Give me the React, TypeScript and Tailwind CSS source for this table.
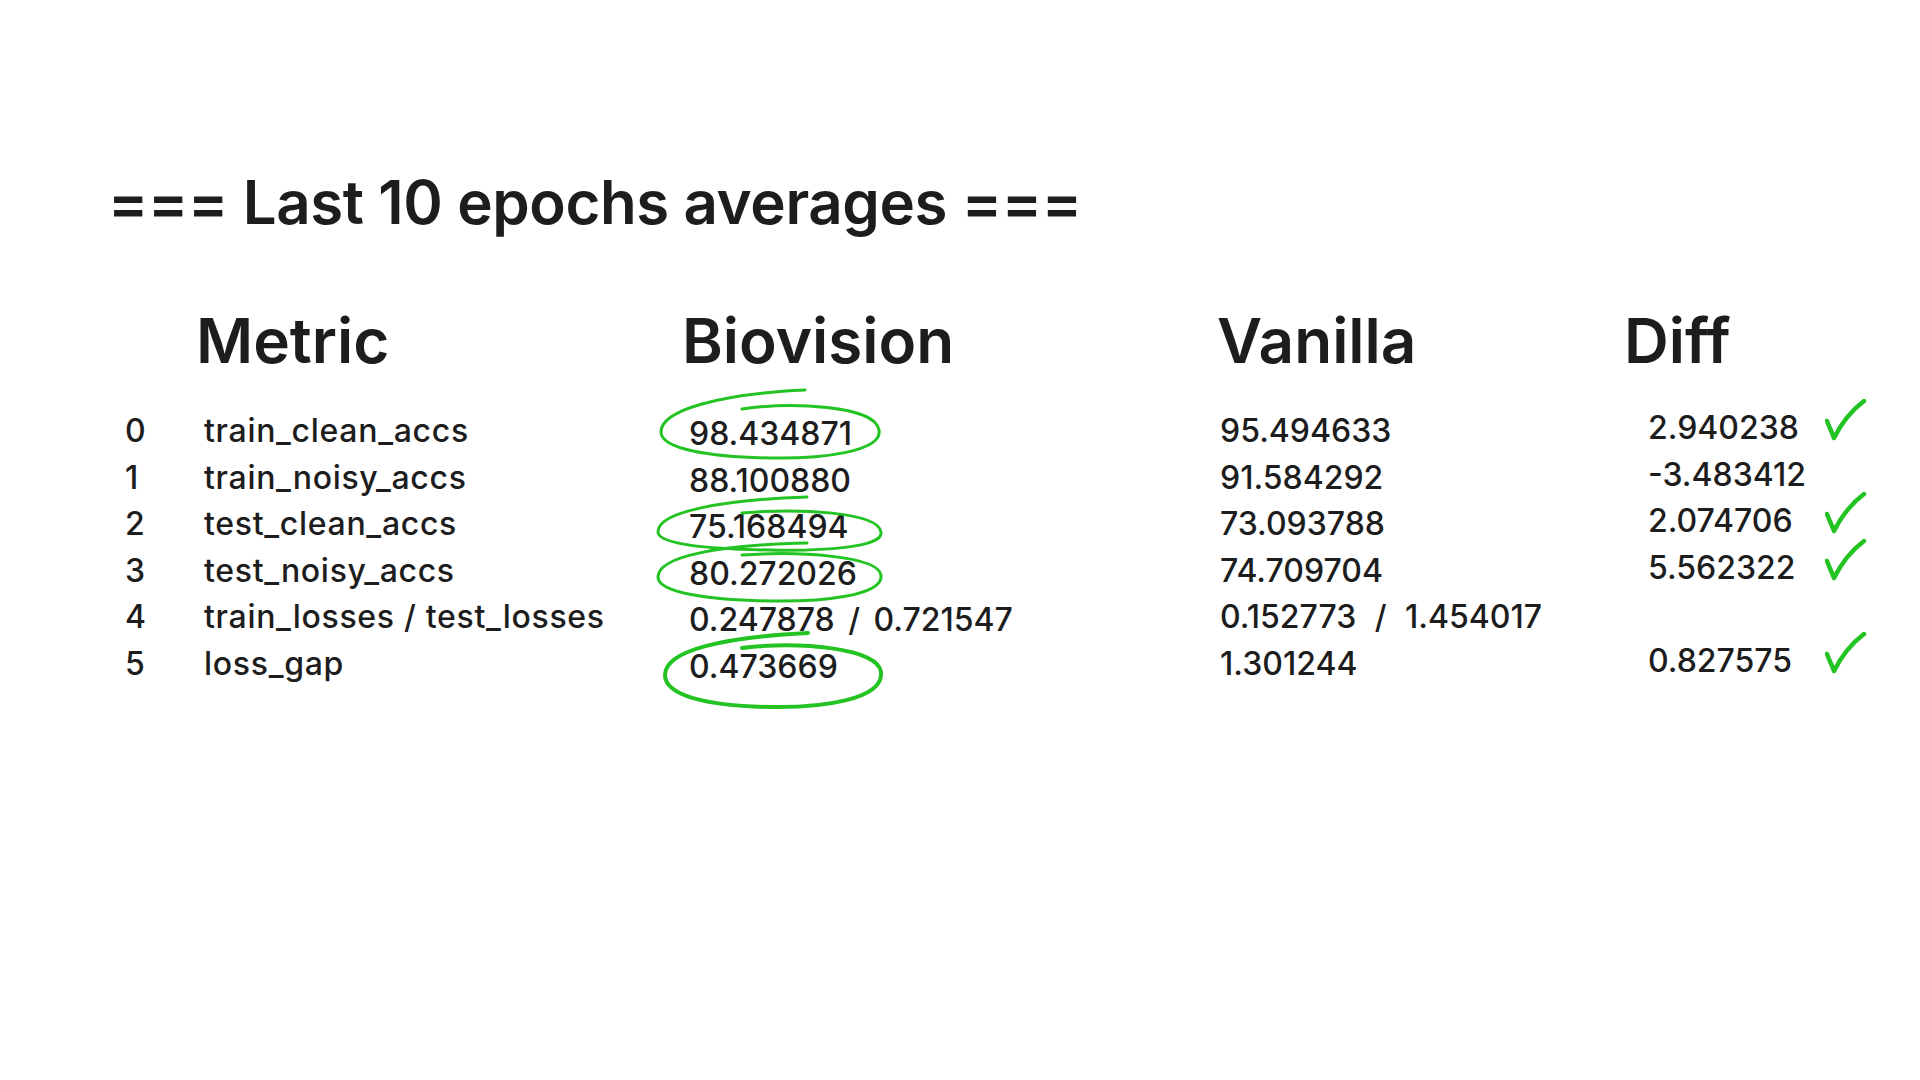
import React from 'react';

interface Row {
  idx: number;
  metric: string;
  bio: string;
  vanilla: string;
  diff: string;
  ok: boolean;
}

const rows: Row[] = [
  { idx: 0, metric: 'train_clean_accs', bio: '98.434871', vanilla: '95.494633', diff: '2.940238', ok: true },
  { idx: 1, metric: 'train_noisy_accs', bio: '88.100880', vanilla: '91.584292', diff: '-3.483412', ok: false },
  { idx: 2, metric: 'test_clean_accs', bio: '75.168494', vanilla: '73.093788', diff: '2.074706', ok: true },
  { idx: 3, metric: 'test_noisy_accs', bio: '80.272026', vanilla: '74.709704', diff: '5.562322', ok: true },
  { idx: 4, metric: 'train_losses / test_losses', bio: '0.247878 / 0.721547', vanilla: '0.152773 / 1.454017', diff: '', ok: false },
  { idx: 5, metric: 'loss_gap', bio: '0.473669', vanilla: '1.301244', diff: '0.827575', ok: true },
];

// hand-drawn loops around the Biovision values, in page coordinates
const loops = [
  { d: 'M742 409 C790 402, 875 405, 879 430 C883 452, 820 459, 770 458 C710 457, 661 449, 661 432 C661 410, 720 394, 805 390', w: 3 },
  { d: 'M742 513 C800 508, 878 512, 881 532 C884 548, 820 551, 770 550 C705 549, 658 544, 658 532 C658 512, 720 500, 807 497', w: 3 },
  { d: 'M742 555 C800 551, 878 556, 881 575 C884 596, 820 602, 770 601 C705 600, 658 592, 658 577 C658 556, 720 545, 807 543', w: 3 },
  { d: 'M742 648 C800 641, 878 648, 881 672 C884 700, 820 708, 770 707 C705 706, 665 695, 665 675 C665 650, 725 637, 808 633', w: 4 },
];

const Check = () => (
  <svg width="42" height="42" viewBox="0 0 42 42" className="-mt-[6px]">
    <path d="M2 22 C4 28, 7 33, 9 39 C16 25, 27 11, 39 2" fill="none" stroke="#22c322" strokeWidth="4.5" strokeLinecap="round" strokeLinejoin="round" />
  </svg>
);

const cols = 'grid grid-cols-[79px_485px_531px_428px_177px_60px]';

export default function App() {
  return (
    <div className="relative w-[1920px] h-[1080px] bg-white text-[#1d1d1d] font-['Inter','Noto_Sans',sans-serif] overflow-hidden">
      <h1 className="pl-[108px] pt-[171px] text-[60px] leading-[62px] font-semibold tracking-[-0.4px]">
        === Last 10 epochs averages ===
      </h1>

      <div className="pl-[125px] mt-[77px]">
        <div className={`${cols} text-[62px] leading-[62px] font-semibold`}>
          <div />
          <div className="-ml-[8px]">Metric</div>
          <div className="-ml-[7px]">Biovision</div>
          <div className="-ml-[3px]">Vanilla</div>
          <div className="-ml-[24px]">Diff</div>
          <div />
        </div>

        <div className="mt-[33px] flex flex-col text-[32px] leading-[46.6px] font-medium">
          {rows.map((r) => (
            <div key={r.idx} className={`${cols} h-[46.6px]`}>
              <div className="pt-[3px]">{r.idx}</div>
              <div className="pt-[3px] tracking-[0.7px]">{r.metric}</div>
              <div className="pt-[6px] [word-spacing:5px]">{r.bio}</div>
              <div className="pt-[3px] [word-spacing:10px]">{r.vanilla}</div>
              <div>{r.diff}</div>
              <div>{r.ok && <Check />}</div>
            </div>
          ))}
        </div>
      </div>

      <svg className="absolute inset-0 pointer-events-none" width="1920" height="1080" viewBox="0 0 1920 1080">
        {loops.map((l, i) => (
          <path key={i} d={l.d} fill="none" stroke="#22c322" strokeWidth={l.w} strokeLinecap="round" />
        ))}
      </svg>
    </div>
  );
}
